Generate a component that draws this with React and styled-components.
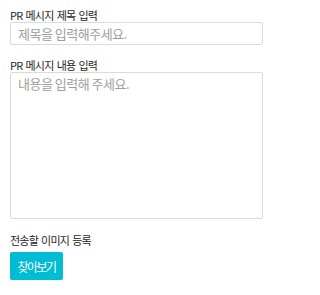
import React from 'react';
import styled, { createGlobalStyle } from 'styled-components';

const GlobalStyle = createGlobalStyle`
  body {
    margin: 0;
    background: #fff;
    font-family: "Noto Sans CJK KR", "Noto Sans", sans-serif;
  }
`;

const Form = styled.div`
  box-sizing: border-box;
  width: 273px;
  display: flex;
  flex-direction: column;
  padding: 9px 10px;
`;

const Field = styled.div`
  display: flex;
  flex-direction: column;
  margin-bottom: ${(p) => p.gap || 14}px;
`;

const Label = styled.label`
  font-size: 11px;
  line-height: 13px;
  letter-spacing: -0.8px;
  word-spacing: 1.5px;
  color: #1e1e1e;
  margin-bottom: ${(p) => p.space || 0}px;
`;

const TextInput = styled.input`
  box-sizing: border-box;
  width: 100%;
  height: 23px;
  border: 1px solid #dadada;
  border-radius: 2px;
  padding: 0 7px;
  font-family: inherit;
  font-size: 13px;
  letter-spacing: -0.5px;
  outline: none;
  &::placeholder {
    color: #9e9e9e;
  }
`;

const TextArea = styled.textarea`
  box-sizing: border-box;
  width: 100%;
  height: 147px;
  border: 1px solid #dadada;
  border-radius: 2px;
  padding: 1px 7px;
  font-family: inherit;
  font-size: 13px;
  letter-spacing: -0.5px;
  resize: none;
  outline: none;
  &::placeholder {
    color: #9e9e9e;
  }
`;

const Button = styled.button`
  align-self: flex-start;
  width: 53px;
  height: 28px;
  padding: 0;
  border: none;
  border-radius: 2px;
  background: #00bcd4;
  color: #fff;
  font-family: inherit;
  font-size: 12px;
  letter-spacing: -1.6px;
  cursor: pointer;
`;

export default function App() {
  return (
    <>
      <GlobalStyle />
      <Form>
        <Field>
          <Label>PR 메시지 제목 입력</Label>
          <TextInput placeholder="제목을 입력해주세요." />
        </Field>
        <Field gap={15}>
          <Label>PR 메시지 내용 입력</Label>
          <TextArea placeholder="내용을 입력해 주세요." />
        </Field>
        <Field gap={0}>
          <Label space={5}>전송할 이미지 등록</Label>
          <Button>찾아보기</Button>
        </Field>
      </Form>
    </>
  );
}
